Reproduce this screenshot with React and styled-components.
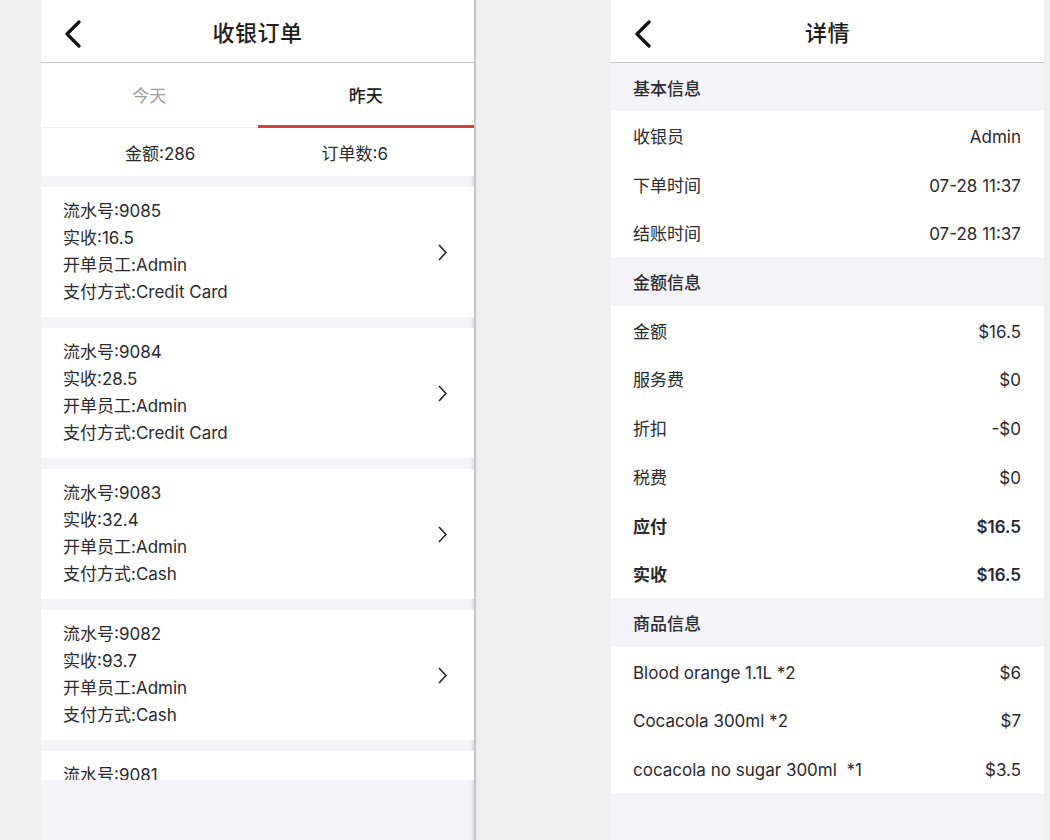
import React from 'react'
import styled, { createGlobalStyle } from 'styled-components'

const GlobalStyle = createGlobalStyle`
  html, body {
    margin: 0;
    padding: 0;
    background: #efefef;
    font-family: Inter, "Noto Sans CJK SC", sans-serif;
    color: #2a2a2e;
  }
  * { box-sizing: border-box; }
`

const Page = styled.div`
  display: flex;
  height: 840px;
  overflow: hidden;
  padding-left: 41px;
`

const Panel = styled.div`
  width: ${({ $w }) => $w}px;
  height: 840px;
  background: #f4f4f8;
  display: flex;
  flex-direction: column;
  overflow: hidden;
  margin-right: ${({ $mr }) => $mr || 0}px;
  border-right: ${({ $edge }) => ($edge ? '2px solid #c6c6c6' : 'none')};
  box-shadow: ${({ $edge }) => ($edge ? 'inset -4px 0 4px -3px rgba(0,0,0,0.12)' : 'none')};
`

const Header = styled.div`
  height: 63px;
  flex-shrink: 0;
  background: #fff;
  border-bottom: 1px solid #c4c4c4;
  display: flex;
  align-items: center;
  justify-content: center;
  position: relative;
`

const BackBt = styled.button`
  position: absolute;
  left: 22px;
  top: 20px;
  width: 22px;
  height: 28px;
  padding: 0;
  border: 0;
  background: none;
  svg { display: block; }
`

const Title = styled.div`
  font-size: 22px;
  font-weight: 500;
  color: #1e1e20;
  letter-spacing: 0.5px;
`

const Tabs = styled.div`
  display: flex;
  height: 65px;
  background: #fff;
  border-bottom: 1px solid #f0f0f0;
  flex-shrink: 0;
`

const Tab = styled.div`
  flex: 1;
  display: flex;
  align-items: center;
  justify-content: center;
  font-size: 17px;
  color: ${({ $active }) => ($active ? '#1e1e20' : '#9a9a9a')};
  font-weight: ${({ $active }) => ($active ? 500 : 400)};
  border-bottom: 3px solid ${({ $active }) => ($active ? '#d9413b' : 'transparent')};
  margin-bottom: -1px;
`

const Summary = styled.div`
  display: flex;
  height: 48px;
  padding: 0 22px;
  background: #fff;
  flex-shrink: 0;
`

const SumCell = styled.div`
  flex: 1;
  display: flex;
  align-items: center;
  justify-content: center;
  font-size: 17px;
  color: #2a2a2e;
`

const OrderList = styled.div`
  height: 604px;
  overflow: hidden;
  padding-top: 11px;
  display: flex;
  flex-direction: column;
  gap: 11px;
  flex-shrink: 0;
`

const Card = styled.div`
  background: #fff;
  height: 130px;
  flex-shrink: 0;
  padding: 11px 27px 11px 22px;
  display: flex;
  align-items: center;
`

const CardInfo = styled.div`
  flex: 1;
  font-size: 17px;
  line-height: 27px;
  color: #2a2a2e;
  align-self: flex-start;
`

const Chevron = styled.svg`
  width: 9px;
  height: 17px;
  flex-shrink: 0;
`

const Section = styled.div`
  height: ${({ $h }) => $h || 48.7}px;
  background: #f4f4f8;
  display: flex;
  align-items: center;
  padding: 0 22px;
  font-size: 17px;
  font-weight: 500;
  color: #2a2a2e;
  flex-shrink: 0;
`

const Row = styled.div`
  height: 48.7px;
  line-height: 44.7px;
  background: #fff;
  display: flex;
  align-items: baseline;
  justify-content: space-between;
  padding: 4px 23px 0 22px;
  font-size: 17px;
  color: #2a2a2e;
  font-weight: ${({ $bold }) => ($bold ? 600 : 400)};
  flex-shrink: 0;
  white-space: pre;
`

const orders = [
  { no: 9085, paid: '16.5', pay: 'Credit Card' },
  { no: 9084, paid: '28.5', pay: 'Credit Card' },
  { no: 9083, paid: '32.4', pay: 'Cash' },
  { no: 9082, paid: '93.7', pay: 'Cash' },
  { no: 9081, paid: '12.0', pay: 'Cash' }
]

const BackIcon = () => (
  <svg width='22' height='28' viewBox='0 0 22 28'>
    <polyline points='16,2 4,14 16,26' fill='none' stroke='#111' strokeWidth='3.2' strokeLinecap='round' strokeLinejoin='round' />
  </svg>
)

const TopBar = ({ title }) => (
  <Header>
    <BackBt><BackIcon /></BackBt>
    <Title>{title}</Title>
  </Header>
)

const OrderCard = ({ o }) => (
  <Card>
    <CardInfo>
      <div>流水号:{o.no}</div>
      <div>实收:{o.paid}</div>
      <div>开单员工:Admin</div>
      <div>支付方式:{o.pay}</div>
    </CardInfo>
    <Chevron viewBox='0 0 9 17'>
      <polyline points='1,1 8,8.5 1,16' fill='none' stroke='#222' strokeWidth='1.6' />
    </Chevron>
  </Card>
)

const App = () => {
  return (
    <Page>
      <GlobalStyle />
      <Panel $w={435} $mr={135} $edge>
        <TopBar title='收银订单' />
        <Tabs>
          <Tab>今天</Tab>
          <Tab $active>昨天</Tab>
        </Tabs>
        <Summary>
          <SumCell>金额:286</SumCell>
          <SumCell>订单数:6</SumCell>
        </Summary>
        <OrderList>
          {orders.map(o => <OrderCard key={o.no} o={o} />)}
        </OrderList>
      </Panel>
      <Panel $w={433}>
        <TopBar title='详情' />
        <Section $h={48}>基本信息</Section>
        <Row><span>收银员</span><span>Admin</span></Row>
        <Row><span>下单时间</span><span>07-28 11:37</span></Row>
        <Row><span>结账时间</span><span>07-28 11:37</span></Row>
        <Section>金额信息</Section>
        <Row><span>金额</span><span>$16.5</span></Row>
        <Row><span>服务费</span><span>$0</span></Row>
        <Row><span>折扣</span><span>-$0</span></Row>
        <Row><span>税费</span><span>$0</span></Row>
        <Row $bold><span>应付</span><span>$16.5</span></Row>
        <Row $bold><span>实收</span><span>$16.5</span></Row>
        <Section>商品信息</Section>
        <Row><span>Blood orange 1.1L *2</span><span>$6</span></Row>
        <Row><span>Cocacola 300ml *2</span><span>$7</span></Row>
        <Row><span>cocacola no sugar 300ml  *1</span><span>$3.5</span></Row>
      </Panel>
    </Page>
  )
}

export default App
